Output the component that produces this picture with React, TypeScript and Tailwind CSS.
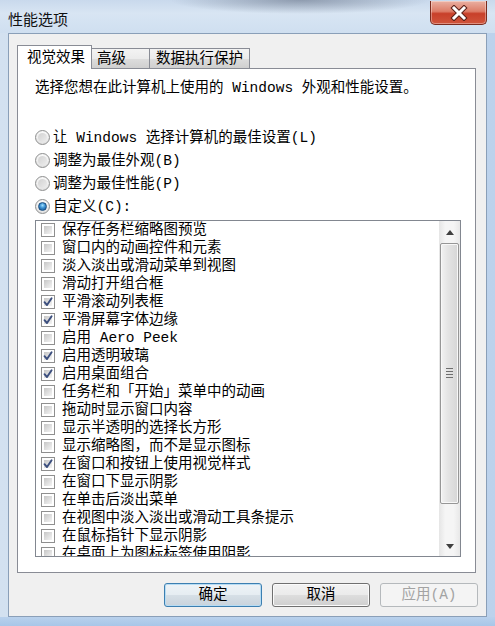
import React from "react";

const items: [string, boolean][] = [
  ["保存任务栏缩略图预览", false],
  ["窗口内的动画控件和元素", false],
  ["淡入淡出或滑动菜单到视图", false],
  ["滑动打开组合框", false],
  ["平滑滚动列表框", true],
  ["平滑屏幕字体边缘", true],
  ["启用 Aero Peek", false],
  ["启用透明玻璃", true],
  ["启用桌面组合", true],
  ["任务栏和「开始」菜单中的动画", false],
  ["拖动时显示窗口内容", false],
  ["显示半透明的选择长方形", false],
  ["显示缩略图，而不是显示图标", false],
  ["在窗口和按钮上使用视觉样式", true],
  ["在窗口下显示阴影", false],
  ["在单击后淡出菜单", false],
  ["在视图中淡入淡出或滑动工具条提示", false],
  ["在鼠标指针下显示阴影", false],
  ["在桌面上为图标标签使用阴影", false],
];

function Radio({ checked }: { checked?: boolean }) {
  return (
    <div className="w-[15px] h-[15px] rounded-full border border-[#8e8f8f] bg-[radial-gradient(circle_at_50%_30%,#ffffff_0%,#f0f0f0_50%,#d4d4d4_100%)] flex items-center justify-center shrink-0">
      {checked ? (
        <div className="w-[9px] h-[9px] rounded-full border border-[#1c4f80] bg-[radial-gradient(circle_at_50%_35%,#9fe0ff_0%,#3a8fd0_45%,#154f8a_100%)]" />
      ) : (
        <div className="w-[9px] h-[9px] rounded-full bg-[linear-gradient(135deg,#d2d2d2_0%,#ececec_100%)]" />
      )}
    </div>
  );
}

function Check({ checked }: { checked?: boolean }) {
  return (
    <div className="w-[14px] h-[14px] border border-[#8f8f8f] bg-white p-[2px] shrink-0 relative">
      <div className="w-full h-full bg-[linear-gradient(135deg,#c6c6c6_0%,#e2e2e2_60%,#f4f4f4_100%)]" />
      {checked && (
        <svg className="absolute left-0 top-0" width="12" height="12" viewBox="0 0 12 12">
          <path d="M2.5 6.2 L5 9 L9.6 2.2" fill="none" stroke="#3b4e7e" strokeWidth="1.9" strokeLinecap="round" strokeLinejoin="round" />
        </svg>
      )}
    </div>
  );
}

function Btn({ children, variant }: { children: React.ReactNode; variant?: "default" | "disabled" }) {
  const base =
    "w-[98px] h-[24px] rounded-[3px] flex items-center justify-center text-[14.5px] leading-[18px]";
  if (variant === "disabled")
    return (
      <div className={`${base} border border-[#b5b9bc] bg-[#f4f4f4] text-[#a3a3a3]`}>{children}</div>
    );
  if (variant === "default")
    return (
      <div className={`${base} border border-[#3c7fb1] bg-[linear-gradient(180deg,#eef3f7_0%,#e6edf2_48%,#d6dfe6_52%,#c9d3dc_100%)] shadow-[inset_0_0_0_1px_#b7dcf3] text-black`}>
        {children}
      </div>
    );
  return (
    <div className={`${base} border border-[#707070] bg-[linear-gradient(180deg,#f2f2f2_0%,#ebebeb_48%,#dddddd_52%,#cfcfcf_100%)] shadow-[inset_0_0_0_1px_#fbfbfb] text-black`}>
      {children}
    </div>
  );
}

export default function App() {
  return (
    <div className="w-[495px] h-[626px] overflow-hidden flex flex-col bg-[linear-gradient(90deg,#d3e1f0_0%,#c9dbef_40%,#bcd2ec_100%)] font-['Liberation_Mono','Noto_Sans_CJK_SC',monospace] text-black">
      {/* title bar */}
      <div className="h-[33px] flex justify-between items-start shrink-0 bg-[radial-gradient(ellipse_130px_14px_at_300px_0px,rgba(70,80,100,0.45),transparent),linear-gradient(180deg,#c9d9ec_0%,#d8e5f3_40%,#cfdff0_100%)]">
        <div className="pl-[8px] pt-[10px] text-[15px] leading-[18px] font-['Noto_Sans_CJK_SC',sans-serif] text-[#111]">
          性能选项
        </div>
        <div className="mr-[8px] mt-[1px] w-[57px] h-[24px] rounded-b-[5px] border border-[#7a2b1e] border-t-0 bg-[linear-gradient(180deg,#eab0a2_0%,#dd7d68_45%,#c8402a_55%,#d0553c_100%)] shadow-[inset_0_0_0_1px_rgba(255,255,255,0.35)] flex items-center justify-center">
          <svg width="18" height="16" viewBox="0 0 18 16">
            <path d="M4 3 L14 13 M14 3 L4 13" stroke="#5a2018" strokeWidth="5" strokeLinecap="square" />
            <path d="M4 3 L14 13 M14 3 L4 13" stroke="#ffffff" strokeWidth="3" strokeLinecap="square" />
          </svg>
        </div>
      </div>

      {/* middle */}
      <div className="flex h-[584px] shrink-0">
        <div className="w-[8px] shrink-0" />
        <div className="w-[479px] h-[584px] border border-[#8a9fb8] bg-[#f0f0f0] pt-[11px] pl-[8px] flex flex-col">
          {/* tabs */}
          <div className="flex items-end h-[23px] text-[14.5px] leading-[18px]">
            <div className="relative z-10 -mb-px h-[24px] w-[75px] bg-white border border-b-0 border-[#898c95] pl-[9px] pt-[3px]">
              视觉效果
            </div>
            <div className="h-[20px] w-[58px] border border-l-0 border-b-0 border-[#898c95] bg-[linear-gradient(180deg,#f3f3f3_0%,#ebebeb_50%,#dddddd_51%,#cfcfcf_100%)] pl-[5px] pt-[1px]">
              高级
            </div>
            <div className="h-[20px] w-[100px] border border-l-0 border-b-0 border-[#898c95] bg-[linear-gradient(180deg,#f3f3f3_0%,#ebebeb_50%,#dddddd_51%,#cfcfcf_100%)] pl-[6px] pt-[1px]">
              数据执行保护
            </div>
          </div>

          {/* panel */}
          <div className="w-[459px] h-[505px] border border-[#898c95] bg-white pt-[10px] pl-[17px] flex flex-col text-[14.5px] leading-[18px]">
            <div className="h-[18px] whitespace-nowrap">选择您想在此计算机上使用的 Windows 外观和性能设置。</div>
            <div className="mt-[29px] flex flex-col">
              {[
                ["让 Windows 选择计算机的最佳设置(L)", false],
                ["调整为最佳外观(B)", false],
                ["调整为最佳性能(P)", false],
                ["自定义(C):", true],
              ].map(([label, on]) => (
                <div key={label as string} className="h-[23px] flex items-center gap-[3px] whitespace-nowrap">
                  <Radio checked={on as boolean} />
                  <span>{label as string}</span>
                </div>
              ))}
            </div>

            {/* list box */}
            <div className="mt-[2px] w-[426px] h-[337px] border border-[#828790] bg-white flex">
              <div className="flex-1 overflow-hidden pl-[5px]">
                {items.map(([label, on]) => (
                  <div key={label} className="h-[18px] flex items-center gap-[7px] whitespace-nowrap">
                    <Check checked={on} />
                    <span>{label}</span>
                  </div>
                ))}
              </div>
              {/* scrollbar */}
              <div className="w-[21px] h-full flex flex-col bg-[linear-gradient(90deg,#e5e5e5_0%,#f5f5f5_30%,#f5f5f5_70%,#e8e8e8_100%)]">
                <div className="h-[22px] flex items-center justify-center">
                  <svg width="8" height="5" viewBox="0 0 8 5">
                    <path d="M0 5 L4 0 L8 5 Z" fill="#3f3f3f" />
                  </svg>
                </div>
                <div className="h-[261px] mx-[1px] rounded-[2px] border border-[#969696] bg-[linear-gradient(90deg,#f2f2f2_0%,#e4e4e4_40%,#d6d6d6_100%)] shadow-[inset_0_0_0_1px_#f8f8f8] flex items-center justify-center">
                  <div className="flex flex-col gap-[2px] -mt-[2px]">
                    <div className="w-[7px] h-px bg-[#6e6e6e]" />
                    <div className="w-[7px] h-px bg-[#6e6e6e]" />
                    <div className="w-[7px] h-px bg-[#6e6e6e]" />
                    <div className="w-[7px] h-px bg-[#6e6e6e]" />
                  </div>
                </div>
                <div className="h-[32px]" />
                <div className="flex-1 flex items-center justify-center">
                  <svg width="8" height="5" viewBox="0 0 8 5">
                    <path d="M0 0 L8 0 L4 5 Z" fill="#3f3f3f" />
                  </svg>
                </div>
              </div>
            </div>
          </div>

          {/* buttons */}
          <div className="mt-[10px] flex justify-end gap-[10px] pr-[8px]">
            <Btn variant="default">确定</Btn>
            <Btn>取消</Btn>
            <Btn variant="disabled">应用(A)</Btn>
          </div>
        </div>
        <div className="w-[8px] shrink-0" />
      </div>
      <div className="flex-1 bg-[linear-gradient(180deg,#b9d1ec_0%,#a8c6e8_100%)]" />
    </div>
  );
}
